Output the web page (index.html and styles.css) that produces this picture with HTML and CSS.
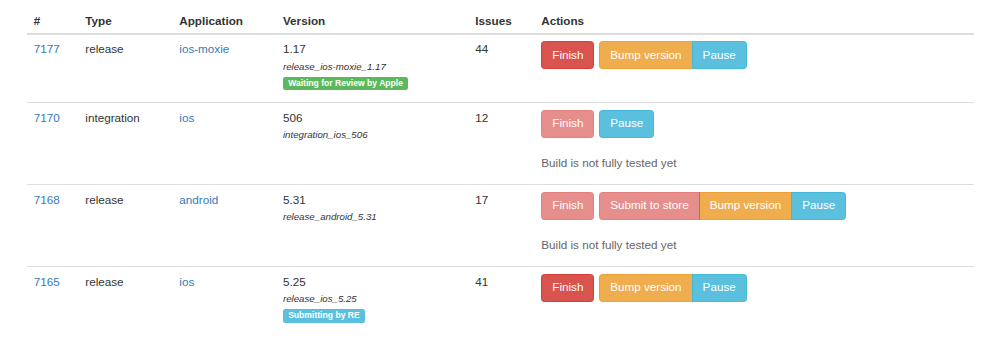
FILE: index.html
```html
<!DOCTYPE html>
<html lang="en">

<head>
    <meta charset="UTF-8">
    <meta name="viewport" content="width=device-width, initial-scale=1.0">
    <title>Builds</title>
    <link rel="stylesheet" href="styles.css">
</head>

<body>
    <div class="container">
        <table class="builds">
            <colgroup>
                <col class="col-id">
                <col class="col-type">
                <col class="col-app">
                <col class="col-version">
                <col class="col-issues">
                <col>
            </colgroup>
            <thead>
                <tr>
                    <th>#</th>
                    <th>Type</th>
                    <th>Application</th>
                    <th>Version</th>
                    <th>Issues</th>
                    <th>Actions</th>
                </tr>
            </thead>
            <tbody>
                <tr>
                    <td><a href="#">7177</a></td>
                    <td>release</td>
                    <td><a href="#">ios-moxie</a></td>
                    <td>
                        <div class="line">1.17</div>
                        <div class="line"><small>release_ios-moxie_1.17</small></div>
                        <div class="line"><span class="label label-success">Waiting for Review by Apple</span></div>
                    </td>
                    <td>44</td>
                    <td>
                        <div class="actions">
                            <button class="btn btn-danger">Finish</button>
                            <div class="btn-group">
                                <button class="btn btn-warning">Bump version</button>
                                <button class="btn btn-info">Pause</button>
                            </div>
                        </div>
                    </td>
                </tr>
                <tr>
                    <td><a href="#">7170</a></td>
                    <td>integration</td>
                    <td><a href="#">ios</a></td>
                    <td>
                        <div class="line">506</div>
                        <div class="line"><small>integration_ios_506</small></div>
                    </td>
                    <td>12</td>
                    <td>
                        <div class="actions">
                            <button class="btn btn-danger" disabled>Finish</button>
                            <button class="btn btn-info">Pause</button>
                        </div>
                        <p class="note">Build is not fully tested yet</p>
                    </td>
                </tr>
                <tr>
                    <td><a href="#">7168</a></td>
                    <td>release</td>
                    <td><a href="#">android</a></td>
                    <td>
                        <div class="line">5.31</div>
                        <div class="line"><small>release_android_5.31</small></div>
                    </td>
                    <td>17</td>
                    <td>
                        <div class="actions">
                            <button class="btn btn-danger" disabled>Finish</button>
                            <div class="btn-group">
                                <button class="btn btn-danger" disabled>Submit to store</button>
                                <button class="btn btn-warning">Bump version</button>
                                <button class="btn btn-info">Pause</button>
                            </div>
                        </div>
                        <p class="note">Build is not fully tested yet</p>
                    </td>
                </tr>
                <tr>
                    <td><a href="#">7165</a></td>
                    <td>release</td>
                    <td><a href="#">ios</a></td>
                    <td>
                        <div class="line">5.25</div>
                        <div class="line"><small>release_ios_5.25</small></div>
                        <div class="line"><span class="label label-info">Submitting by RE</span></div>
                    </td>
                    <td>41</td>
                    <td>
                        <div class="actions">
                            <button class="btn btn-danger">Finish</button>
                            <div class="btn-group">
                                <button class="btn btn-warning">Bump version</button>
                                <button class="btn btn-info">Pause</button>
                            </div>
                        </div>
                    </td>
                </tr>
            </tbody>
        </table>
    </div>
</body>

</html>
```

FILE: styles.css
```css
body {
    font-family: "Liberation Sans", Arial, sans-serif;
    font-size: 11.7px;
    line-height: 16.7px;
    color: #333;
    background-color: #fff;
    margin: 0;
    padding: 0;
}

a {
    color: #337ab7;
    text-decoration: none;
}

.container {
    padding: 0 26px 0 27px;
}

.builds {
    width: 100%;
    table-layout: fixed;
    border-collapse: collapse;
    border-spacing: 0;
}

.col-id {
    width: 51.6px;
}

.col-type {
    width: 94px;
}

.col-app {
    width: 103.7px;
}

.col-version {
    width: 192.3px;
}

.col-issues {
    width: 66px;
}

.builds th {
    text-align: left;
    font-weight: bold;
    padding: 12.5px 6.7px 3.3px;
    border-bottom: 2px solid #ddd;
}

.builds td {
    vertical-align: top;
    padding: 6.7px 6.7px 10.6px;
    border-top: 1px solid #ddd;
}

.builds tbody tr:first-child td {
    border-top: none;
}

.line {
    height: 16.7px;
    white-space: nowrap;
}

small {
    font-size: 9.7px;
    font-style: italic;
}

.label {
    display: inline-block;
    font-size: 8.6px;
    font-weight: bold;
    line-height: 1;
    color: #fff;
    padding: 0.25em 0.6em 0.35em;
    border-radius: 2.5px;
    vertical-align: middle;
}

.label-success {
    background-color: #5cb85c;
}

.label-info {
    background-color: #5bc0de;
}

.actions {
    display: flex;
    gap: 4.7px;
}

.btn-group {
    display: flex;
}

.btn {
    font-family: inherit;
    font-size: 11.7px;
    line-height: 16.7px;
    padding: 4.7px 10px;
    color: #fff;
    border: 1px solid transparent;
    border-radius: 3.3px;
    cursor: pointer;
    margin: 0;
}

.btn[disabled] {
    opacity: 0.65;
    cursor: not-allowed;
}

.btn-group .btn {
    border-radius: 0;
}

.btn-group .btn + .btn {
    margin-left: -1px;
}

.btn-group .btn:first-child {
    border-radius: 3.3px 0 0 3.3px;
}

.btn-group .btn:last-child {
    border-radius: 0 3.3px 3.3px 0;
}

.btn-danger {
    background-color: #d9534f;
    border-color: #d43f3a;
}

.btn-warning {
    background-color: #f0ad4e;
    border-color: #eea236;
}

.btn-info {
    background-color: #5bc0de;
    border-color: #46b8da;
}

.note {
    margin: 17.5px 0 1.5px;
    color: #666;
}
```
